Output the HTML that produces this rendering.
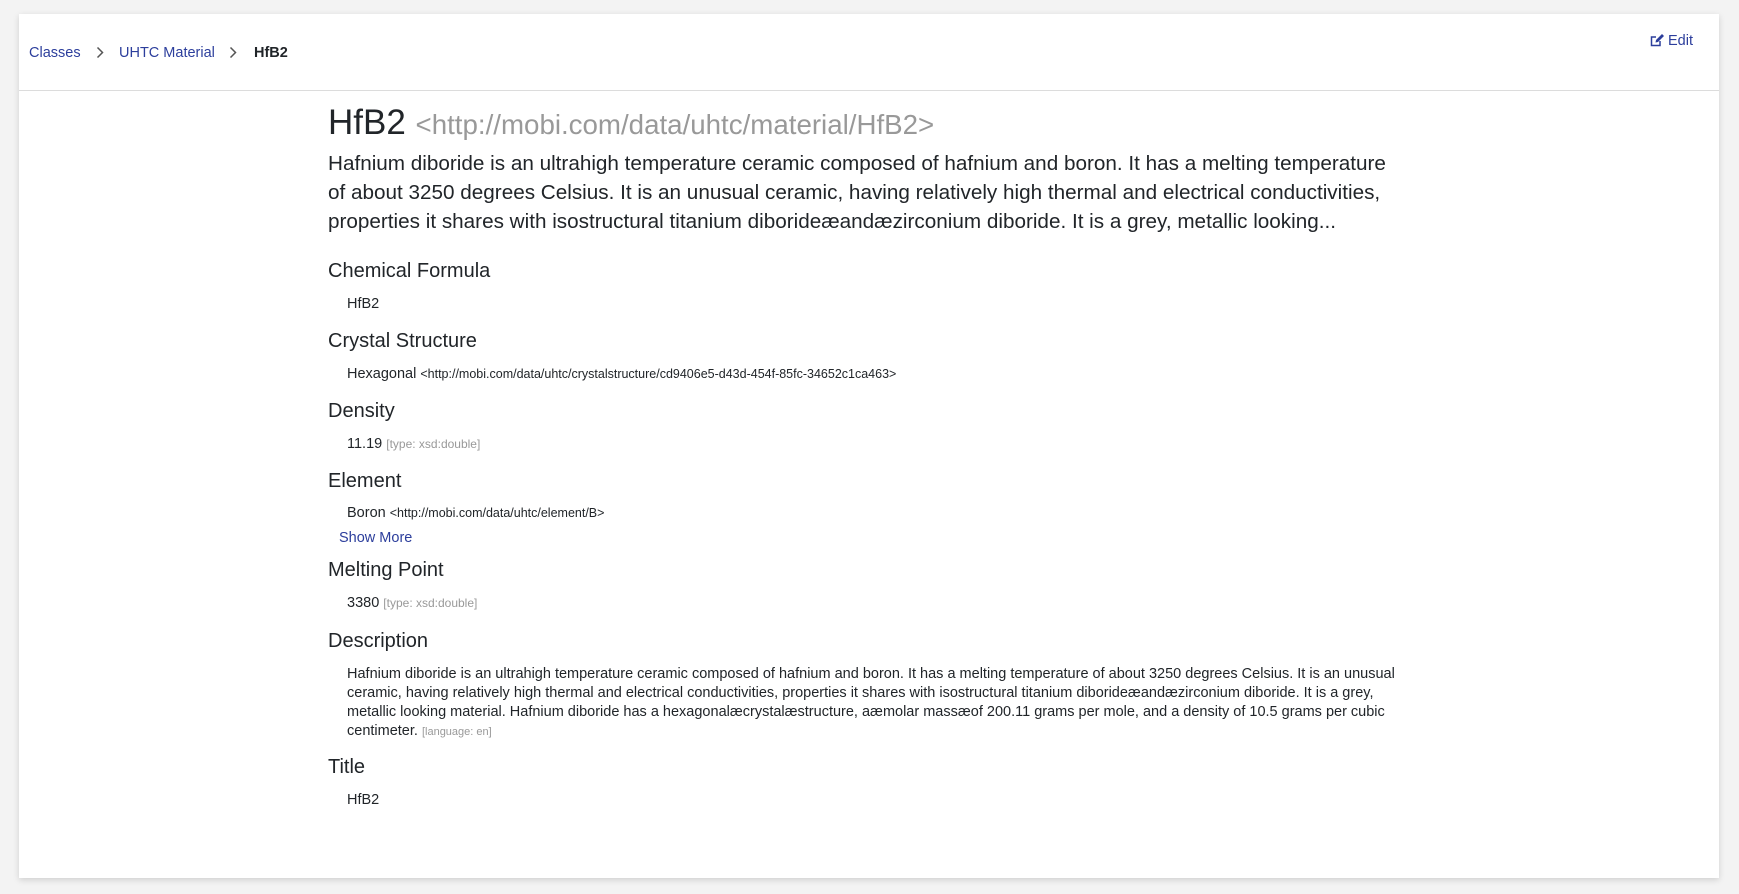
<!DOCTYPE html>
<html><head><meta charset="utf-8"><style>
body{margin:0;width:1739px;height:894px;background:#f3f3f3;font-family:"Liberation Sans",sans-serif;color:#212529;overflow:hidden;position:relative}
.card{position:absolute;left:19px;top:14px;width:1700px;height:864px;background:#fff;box-shadow:0 2px 6px rgba(0,0,0,.15)}
.hdr{position:absolute;left:0;top:0;width:1700px;height:76px;border-bottom:1px solid #dcdcdc}
.a{position:absolute;white-space:nowrap}
.bc{font-size:14.5px;line-height:20px;top:43px}
.link{color:#2c3e9c}
.h{font-size:20px;line-height:24px;left:328px}
.v{font-size:14.5px;line-height:20px;left:347px}
.v small{font-size:12px;color:#999}
.v code{font-size:12.5px;font-family:"Liberation Sans",sans-serif}
</style></head><body>
<div class="card"><div class="hdr"></div></div>
<div class="a bc link" style="left:29px">Classes</div>
<svg class="a" style="left:96px;top:46px" width="8" height="13" viewBox="0 0 8 13"><path d="M1.5 1.5L6.5 6.5L1.5 11.5" fill="none" stroke="#555" stroke-width="1.5"/></svg>
<div class="a bc link" style="left:119px">UHTC Material</div>
<svg class="a" style="left:229px;top:46px" width="8" height="13" viewBox="0 0 8 13"><path d="M1.5 1.5L6.5 6.5L1.5 11.5" fill="none" stroke="#555" stroke-width="1.5"/></svg>
<div class="a bc" style="left:254px;font-weight:bold">HfB2</div>
<svg class="a" style="left:1650px;top:34px" width="14" height="13" viewBox="0 0 14 13"><path d="M10 7v4.5H1.5V3H6" fill="none" stroke="#2c3e9c" stroke-width="1.5"/><path d="M5.5 8.5l.5-2.5 6-6 2 2-6 6z" fill="#2c3e9c"/></svg>
<div class="a link" style="left:1668px;top:31px;font-size:14.5px;line-height:20px">Edit</div>
<div class="a" style="left:328px;top:103px;font-size:35px;line-height:40px">HfB2 <span style="font-size:27.7px;color:#999">&lt;http://mobi.com/data/uhtc/material/HfB2&gt;</span></div>
<div class="a" style="left:328px;top:149px;width:1080px;font-size:20.7px;line-height:29px;white-space:normal">Hafnium diboride is an ultrahigh temperature ceramic composed of hafnium and boron. It has a melting temperature of about 3250 degrees Celsius. It is an unusual ceramic, having relatively high thermal and electrical conductivities, properties it shares with isostructural titanium diborideæandæzirconium diboride. It is a grey, metallic looking...</div>
<div class="a h" style="top:259px">Chemical Formula</div>
<div class="a v" style="top:294px">HfB2</div>
<div class="a h" style="top:329px">Crystal Structure</div>
<div class="a v" style="top:364px">Hexagonal <code>&lt;http://mobi.com/data/uhtc/crystalstructure/cd9406e5-d43d-454f-85fc-34652c1ca463&gt;</code></div>
<div class="a h" style="top:399px">Density</div>
<div class="a v" style="top:434px">11.19 <small>[type: xsd:double]</small></div>
<div class="a h" style="top:469px">Element</div>
<div class="a v" style="top:503px">Boron <code>&lt;http://mobi.com/data/uhtc/element/B&gt;</code></div>
<div class="a v link" style="left:339px;top:528px">Show More</div>
<div class="a h" style="top:558px">Melting Point</div>
<div class="a v" style="top:593px">3380 <small>[type: xsd:double]</small></div>
<div class="a h" style="top:629px">Description</div>
<div class="a v" style="top:665px;width:1060px;white-space:normal;font-size:14.5px;line-height:19px">Hafnium diboride is an ultrahigh temperature ceramic composed of hafnium and boron. It has a melting temperature of about 3250 degrees Celsius. It is an unusual ceramic, having relatively high thermal and electrical conductivities, properties it shares with isostructural titanium diborideæandæzirconium diboride. It is a grey, metallic looking material. Hafnium diboride has a hexagonalæcrystalæstructure, aæmolar massæof 200.11 grams per mole, and a density of 10.5 grams per cubic centimeter. <small style="font-size:11px">[language: en]</small></div>
<div class="a h" style="top:755px">Title</div>
<div class="a v" style="top:790px">HfB2</div>
</body></html>
